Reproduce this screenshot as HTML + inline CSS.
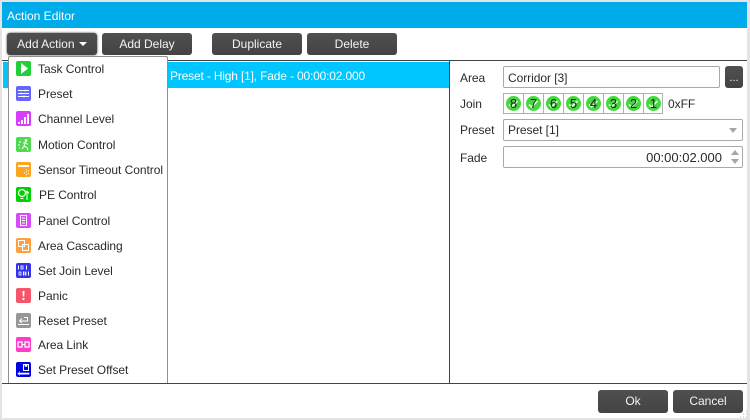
<!DOCTYPE html>
<html><head><meta charset="utf-8">
<style>
html,body{margin:0;padding:0;background:#fff}
#r{position:relative;width:750px;height:420px;overflow:hidden;background:#fff;font-family:"Liberation Sans",sans-serif;font-size:12px;color:#2a2a2a}
#r div,#r svg{position:absolute}
.t{white-space:nowrap;line-height:16px;height:16px}
.b{background:linear-gradient(#505050,#434343);border-radius:3px;color:#f4f4f4;text-align:center;line-height:22px;height:22px;width:90px}
.i{left:16px;width:15px;height:15px;border-radius:2px}
.m{left:38px;letter-spacing:-.05px}
.f{border:1px solid #a9a9a9;border-radius:2px;box-sizing:border-box;background:#fff}
.c{width:21px;height:21px;top:93px;box-sizing:border-box;border:1px solid #b0b0b0}
.c i{position:absolute;left:2px;top:2px;width:15px;height:15px;border-radius:50%;background:#44d83e}
.c svg{left:2px;top:2px}
#r .c b{position:absolute;left:2px;top:2px;width:15px;height:15px;font-weight:normal;text-align:center;line-height:15px;font-size:13px;color:#222}
.l{letter-spacing:-.05px}
</style></head><body>
<div id="r">
<div style="left:0;top:0;width:750px;height:2px;background:#e4e4e4"></div>
<div style="left:0;top:0;width:2px;height:420px;background:#e4e4e4"></div>
<div style="left:747px;top:0;width:3px;height:420px;background:#e4e4e4"></div>
<div style="left:0;top:418px;width:750px;height:2px;background:#e4e4e4"></div>
<div style="left:2px;top:2px;width:745px;height:26px;background:#00abea"></div>
<div class="t" style="left:7px;top:8px;color:#fff;font-size:12px">Action Editor</div>

<div class="b" style="left:7px;top:33px;box-shadow:0 0 2px #333">Add Action <span style="display:inline-block;width:0;height:0;border:4px solid transparent;border-top-color:#fff;border-bottom:0;vertical-align:2px;margin-left:1px"></span></div>
<div class="b" style="left:102px;top:33px">Add Delay</div>
<div class="b" style="left:212px;top:33px">Duplicate</div>
<div class="b" style="left:307px;top:33px">Delete</div>

<div style="left:2px;top:60px;width:745px;height:1px;background:#444"></div>
<div style="left:3px;top:62px;width:446px;height:26px;background:#00c6ff"></div>
<div class="t" style="left:170px;top:68px;color:#fff;letter-spacing:-.17px">Preset - High [1], Fade - 00:00:02.000</div>
<div style="left:449px;top:61px;width:1px;height:322px;background:#444"></div>
<div style="left:2px;top:383px;width:745px;height:1px;background:#444"></div>

<div style="left:8px;top:56px;width:160px;height:327px;box-sizing:border-box;background:#fff;border:1px solid #8f8f8f;border-bottom:0;border-radius:2px 2px 0 0"></div>

<div class="i" style="top:61px;background:#22cf3a"></div>
<svg style="left:16px;top:61px" width="15" height="15"><path d="M5 2 L12 7.500 L5 13Z" fill="#fff"/></svg>
<div class="t m" style="top:61px">Task Control</div>

<div class="i" style="top:86px;background:#6464ff"></div>
<svg style="left:16px;top:86px" width="15" height="15"><path d="M2 4.500H13M2 7.500H13M2 10.500H13" stroke="#fff" fill="none"/><path d="M9 3.500V5.500M5 6.500V8.500M8 9.500V11.500" stroke="#fff"/></svg>
<div class="t m" style="top:86px">Preset</div>

<div class="i" style="top:111px;background:#d83cff"></div>
<svg style="left:16px;top:111px" width="15" height="15"><path d="M2 11h2v2H2zM5 9h2v4H5zM8 6h2v7H8zM11 3h2v10h-2z" fill="#fff"/></svg>
<div class="t m" style="top:111px">Channel Level</div>

<div class="i" style="top:137px;background:#50d850"></div>
<svg style="left:16px;top:137px" width="15" height="15"><circle cx="10" cy="3.500" r="1.400" fill="#fff"/><path d="M9.500 5L8 9l3 1.500 1 3M8 9l-2 3M7 6l2.500-.5 2 2M3 5h2M2 8h2M3 11h1" stroke="#fff" fill="none"/></svg>
<div class="t m" style="top:137px">Motion Control</div>

<div class="i" style="top:162px;background:#ffa41e"></div>
<svg style="left:16px;top:162px" width="15" height="15"><path d="M2 3h11v2H2z" fill="#fff"/><path d="M8 11h1M10 8h1M12 9h1M10 12.500h1M12 11.500h1M10 10h1" stroke="#fff"/></svg>
<div class="t m" style="top:162px">Sensor Timeout Control</div>

<div class="i" style="top:187px;background:#00d000"></div>
<svg style="left:16px;top:187px" width="15" height="15"><circle cx="6" cy="6" r="3.500" fill="none" stroke="#fff" stroke-width="1.200"/><path d="M4.500 11.500h3M11 13V5M9 6.500L11 4l2 2.500" stroke="#fff" fill="none"/></svg>
<div class="t m" style="top:187px;left:39px">PE Control</div>

<div class="i" style="top:213px;background:#d84cf8"></div>
<svg style="left:16px;top:213px" width="15" height="15"><path d="M4.500 2.500h6v10h-6z" fill="none" stroke="#fff"/><path d="M6 5h3M6 7.500h3M6 10h3" stroke="#fff"/></svg>
<div class="t m" style="top:213px">Panel Control</div>

<div class="i" style="top:238px;background:#ffa03c"></div>
<svg style="left:16px;top:238px" width="15" height="15"><path d="M2.500 2.500h6v6h-6zM6.500 6.500h6v6h-6z" fill="none" stroke="#fff"/></svg>
<div class="t m" style="top:238px">Area Cascading</div>

<div class="i" style="top:263px;background:#3232f0"></div>
<svg style="left:16px;top:263px" width="15" height="15"><path d="M2.500 2.500v4M10.500 2.500v4M7.500 8.500v4M12.500 8.500v4" stroke="#fff"/><path d="M5 3h2v3H5zM5 9H3v3h2zM10 9H9v3h1z" fill="none" stroke="#fff" stroke-width=".8"/></svg>
<div class="t m" style="top:263px">Set Join Level</div>

<div class="i" style="top:288px;background:#f4566c"></div>
<svg style="left:16px;top:288px" width="15" height="15"><path d="M6.500 3h2l-.3 5.500h-1.400z" fill="#fff"/><circle cx="7.500" cy="11" r="1.100" fill="#fff"/></svg>
<div class="t m" style="top:288px">Panic</div>

<div class="i" style="top:313px;background:#979797"></div>
<svg style="left:16px;top:313px" width="15" height="15"><path d="M2 11.500h11M4 8h7.500V4.500H8M6 5.500L3.500 8 6 10" stroke="#fff" fill="none"/></svg>
<div class="t m" style="top:313px">Reset Preset</div>

<div class="i" style="top:337px;background:#ff3cc8"></div>
<svg style="left:16px;top:337px" width="15" height="15"><path d="M2 5h4v5H2zM9 5h4v5H9z" fill="none" stroke="#fff" stroke-width="1.200"/><path d="M6 7.500h3" stroke="#fff"/></svg>
<div class="t m" style="top:337px">Area Link</div>

<div class="i" style="top:362px;background:#0000e6"></div>
<svg style="left:16px;top:362px" width="15" height="15"><path d="M7.500 2.500h5v6h-5z" fill="none" stroke="#fff"/><path d="M9 2.500h2v2H9zM2 11h11v1.200H2zM3.500 9.500v4" fill="#fff" stroke="#fff" stroke-width=".6"/></svg>
<div class="t m" style="top:362px">Set Preset Offset</div>

<div class="t l" style="left:460px;top:70px">Area</div>
<div class="f" style="left:503px;top:66px;width:217px;height:22px"></div>
<div class="t l" style="left:508px;top:70px">Corridor [3]</div>
<div class="b" style="left:725px;top:66px;width:18px;font-size:11px;line-height:24px">...</div>

<div class="t l" style="left:460px;top:96px">Join</div>
<div class="c" style="left:503px"><i></i><svg width="15" height="15"><path d="M3 8.500l2.500 2.500 6-6" stroke="#fff" stroke-width="1.500" fill="none"/></svg><b>8</b></div>
<div class="c" style="left:523px"><i></i><svg width="15" height="15"><path d="M3 8.500l2.500 2.500 6-6" stroke="#fff" stroke-width="1.500" fill="none"/></svg><b>7</b></div>
<div class="c" style="left:543px"><i></i><svg width="15" height="15"><path d="M3 8.500l2.500 2.500 6-6" stroke="#fff" stroke-width="1.500" fill="none"/></svg><b>6</b></div>
<div class="c" style="left:563px"><i></i><svg width="15" height="15"><path d="M3 8.500l2.500 2.500 6-6" stroke="#fff" stroke-width="1.500" fill="none"/></svg><b>5</b></div>
<div class="c" style="left:583px"><i></i><svg width="15" height="15"><path d="M3 8.500l2.500 2.500 6-6" stroke="#fff" stroke-width="1.500" fill="none"/></svg><b>4</b></div>
<div class="c" style="left:603px"><i></i><svg width="15" height="15"><path d="M3 8.500l2.500 2.500 6-6" stroke="#fff" stroke-width="1.500" fill="none"/></svg><b>3</b></div>
<div class="c" style="left:623px"><i></i><svg width="15" height="15"><path d="M3 8.500l2.500 2.500 6-6" stroke="#fff" stroke-width="1.500" fill="none"/></svg><b>2</b></div>
<div class="c" style="left:643px;width:20px"><i></i><svg width="15" height="15"><path d="M3 8.500l2.500 2.500 6-6" stroke="#fff" stroke-width="1.500" fill="none"/></svg><b>1</b></div>
<div class="t l" style="left:668px;top:96px">0xFF</div>

<div class="t l" style="left:460px;top:122px">Preset</div>
<div class="f" style="left:503px;top:119px;width:240px;height:22px"></div>
<div class="t l" style="left:508px;top:122px">Preset [1]</div>
<div style="left:729px;top:128px;width:0;height:0;border:4px solid transparent;border-top:5px solid #a6a6a6;border-bottom:0"></div>

<div class="t l" style="left:460px;top:150px">Fade</div>
<div class="f" style="left:503px;top:146px;width:240px;height:22px"></div>
<div class="t" style="right:28px;top:150px;font-size:13px">00:00:02.000</div>
<div style="left:731px;top:150px;width:0;height:0;border:4px solid transparent;border-bottom:5px solid #a6a6a6;border-top:0"></div>
<div style="left:731px;top:159px;width:0;height:0;border:4px solid transparent;border-top:5px solid #a6a6a6;border-bottom:0"></div>

<div class="b" style="left:598px;top:390px;width:70px;height:23px">Ok</div>
<div class="b" style="left:673px;top:390px;width:70px;height:23px">Cancel</div>
<svg style="left:738px;top:409px" width="12" height="11"><path d="M8 2h1M5 5h1M8 5h1M2 8h1M5 8h1M8 8h1" stroke="#b5b5b5"/></svg>
</div>
</body></html>
